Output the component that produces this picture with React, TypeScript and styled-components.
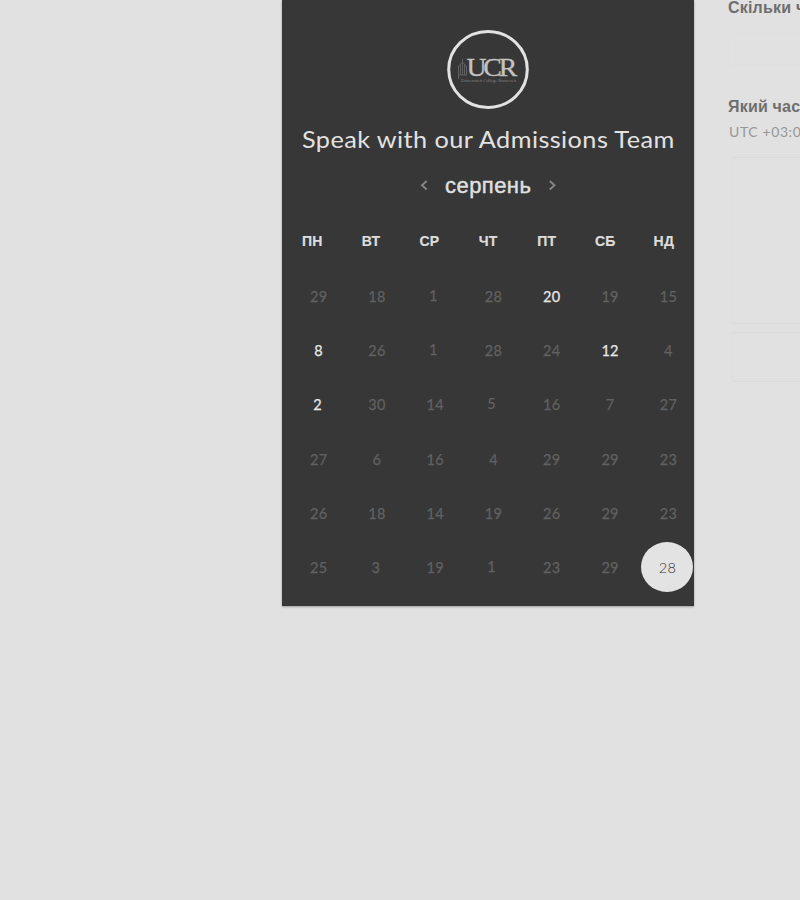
import React from 'react';
import styled, { createGlobalStyle } from 'styled-components';

const GlobalStyle = createGlobalStyle`
  * { box-sizing: border-box; }
  html, body { margin: 0; background: #e1e1e1; }
  body { overflow: hidden; }
`;

const Page = styled.main`
  display: grid;
  grid-template-columns: 412px 1fr;
  column-gap: 34px;
  align-items: start;
  width: 800px;
  height: 900px;
  padding-left: 282px;
  overflow: hidden;
  background: #e1e1e1;
  font-family: Lato, sans-serif;
`;

const Panel = styled.section`
  display: flex;
  flex-direction: column;
  height: 606px;
  padding-top: 29px;
  background: #373737;
  box-shadow: 0 1px 2px rgba(0, 0, 0, 0.3);
`;

const Logo = styled.svg`
  display: block;
  flex: none;
  width: 84px;
  height: 81px;
  margin-left: 164px;
`;

const Title = styled.h1`
  margin: 13px 0 0 19.5px;
  height: 34px;
  color: #e2e2e2;
  font-size: 24px;
  font-weight: 400;
  line-height: 32px;
  letter-spacing: 0.4px;
  white-space: nowrap;
  transform: scaleX(1.053);
  transform-origin: left;
`;

const MonthBar = styled.div`
  display: flex;
  align-items: center;
  height: 30px;
  margin: 13px 0 0 137px;
`;

const Arrow = styled.button`
  display: flex;
  width: 10px;
  height: 14px;
  padding: 0;
  border: 0;
  background: none;
  color: #868686;
`;

const Month = styled.h2`
  width: 87px;
  height: 30px;
  margin: 0 16px;
  color: #e0e0e0;
  font: 400 22px/32px 'Liberation Sans', sans-serif;
  letter-spacing: 0.45px;
  -webkit-text-stroke: 0.4px #e0e0e0;
  white-space: nowrap;
`;

const Weekdays = styled.div`
  display: grid;
  grid-template-columns: repeat(7, 58.6px);
  height: 20px;
  margin: 31px 0 0 1px;
`;

const Weekday = styled.span`
  color: #dddddd;
  font: 700 14px/20px 'Liberation Sans', sans-serif;
  letter-spacing: 0.2px;
  text-align: center;
  -webkit-text-stroke: 0.2px #dddddd;
`;

const Days = styled.div`
  display: grid;
  grid-template-columns: repeat(7, 58.3px);
  grid-auto-rows: 54.2px;
  margin: 19px 0 0 7px;
`;

type Tone = 'muted' | 'open' | 'selected';

const Day = styled.button<{ $tone: Tone; $dx: number; $dy: number }>`
  place-self: center;
  width: 52px;
  height: 50px;
  padding: 0 0 0 1px;
  border: 0;
  border-radius: 50%;
  background: ${({ $tone }) => ($tone === 'selected' ? '#e3e3e3' : 'transparent')};
  color: ${({ $tone }) => ({ muted: '#616161', open: '#e8e8e8', selected: '#333333' })[$tone]};
  font: ${({ $tone }) => ($tone === 'selected' ? '300 14.5px/47px' : '400 14.5px/48px')} Lato, sans-serif;
  letter-spacing: 0.3px;
  text-align: center;
  -webkit-text-stroke: ${({ $tone }) => ({ muted: '0.25px', open: '0.25px', selected: '0' })[$tone]} currentColor;
  transform: translate(${({ $dx }) => $dx}px, ${({ $dy }) => $dy}px);
`;

const Details = styled.aside`
  display: flex;
  flex-direction: column;
  min-width: 0;
  overflow: hidden;
`;

const Label = styled.h3`
  margin: 0;
  height: 20px;
  color: #6e6e6e;
  font: 700 16px/22px 'Liberation Sans', sans-serif;
  letter-spacing: 0.2px;
  white-space: nowrap;
`;

const DurationLabel = styled(Label)`
  margin-top: -3px;
`;

const DurationField = styled.div`
  width: 160px;
  height: 32px;
  margin: 16px 0 31px;
  border: 1px solid #dfdfdf;
  border-radius: 4px;
`;

const Zone = styled.p`
  margin: 6px 0 0 1px;
  height: 20px;
  color: #969696;
  font-size: 14px;
  line-height: 19px;
  letter-spacing: 0.6px;
  white-space: nowrap;
`;

const Slot = styled.div<{ $height: number; $top: number }>`
  flex: none;
  width: 160px;
  height: ${({ $height }) => $height}px;
  margin: ${({ $top }) => $top}px 0 0 4px;
  border: 1px solid #dadada;
  border-left-color: #dedede;
  border-radius: 3px;
`;

const weekdays = ['ПН', 'ВТ', 'СР', 'ЧТ', 'ПТ', 'СБ', 'НД'];

const weeks = [
  [29, 18, 1, 28, 20, 19, 15],
  [8, 26, 1, 28, 24, 12, 4],
  [2, 30, 14, 5, 16, 7, 27],
  [27, 6, 16, 4, 29, 29, 23],
  [26, 18, 14, 19, 26, 29, 23],
  [25, 3, 19, 1, 23, 29, 28],
];

const openDays = new Set(['0-4', '1-0', '1-5', '2-0']);

const nudges: Record<string, [number, number]> = {
  '0-2': [-2, -1],
  '1-2': [-2, -1],
  '2-0': [-1, 0],
  '2-3': [-2, -1],
  '5-1': [-1, 0],
  '5-3': [-2, -1],
  '5-6': [-1, -1],
};

const toneOf = (key: string): Tone =>
  key === '5-6' ? 'selected' : openDays.has(key) ? 'open' : 'muted';

const Chevron = ({ d }: { d: string }) => (
  <svg width="10" height="14" viewBox="0 0 10 14" fill="none" stroke="currentColor" strokeWidth="1.9">
    <path d={d} />
  </svg>
);

export default function App() {
  return (
    <>
      <GlobalStyle />
      <Page>
        <Panel>
          <Logo viewBox="0 0 84 81">
            <ellipse cx="42" cy="40.5" rx="39.3" ry="38" fill="none" stroke="#e2e2e2" strokeWidth="3" />
            <g fill="none" stroke="#606060" strokeWidth="1">
              <path d="M12.5 50V38M14.5 46V35M16.5 46V30M18.5 46V35M20.5 46V38M12 38l4.5-5 4.5 5M12 46h9" />
            </g>
            <g fill="#c4c4c4" stroke="#c4c4c4" strokeWidth="0.3" fontFamily="Liberation Serif, serif" fontSize="26">
              <text x="20.5" y="46.7" textLength="47.5" lengthAdjust="spacingAndGlyphs" letterSpacing="-3">UCR</text>
            </g>
            <text x="15" y="52.5" fill="#858585" fontFamily="Liberation Serif, serif" fontSize="4.5" textLength="55">Universiteit College Roosevelt</text>
          </Logo>
          <Title>Speak with our Admissions Team</Title>
          <MonthBar>
            <Arrow aria-label="Попередній місяць"><Chevron d="M7.7 3L3 7.2l4.7 4.3" /></Arrow>
            <Month>серпень</Month>
            <Arrow aria-label="Наступний місяць"><Chevron d="M1.8 3L6.5 7.2l-4.7 4.3" /></Arrow>
          </MonthBar>
          <Weekdays>
            {weekdays.map((name) => <Weekday key={name}>{name}</Weekday>)}
          </Weekdays>
          <Days>
            {weeks.flatMap((week, row) =>
              week.map((day, col) => {
                const key = `${row}-${col}`;
                const [dx, dy] = nudges[key] ?? [0, 0];
                return <Day key={key} $tone={toneOf(key)} $dx={dx} $dy={dy}>{day}</Day>;
              }),
            )}
          </Days>
        </Panel>
        <Details>
          <DurationLabel>Скільки ч</DurationLabel>
          <DurationField />
          <Label>Який час</Label>
          <Zone>UTC +03:00</Zone>
          <Slot $height={167} $top={15} />
          <Slot $height={50} $top={8} />
        </Details>
      </Page>
    </>
  );
}
